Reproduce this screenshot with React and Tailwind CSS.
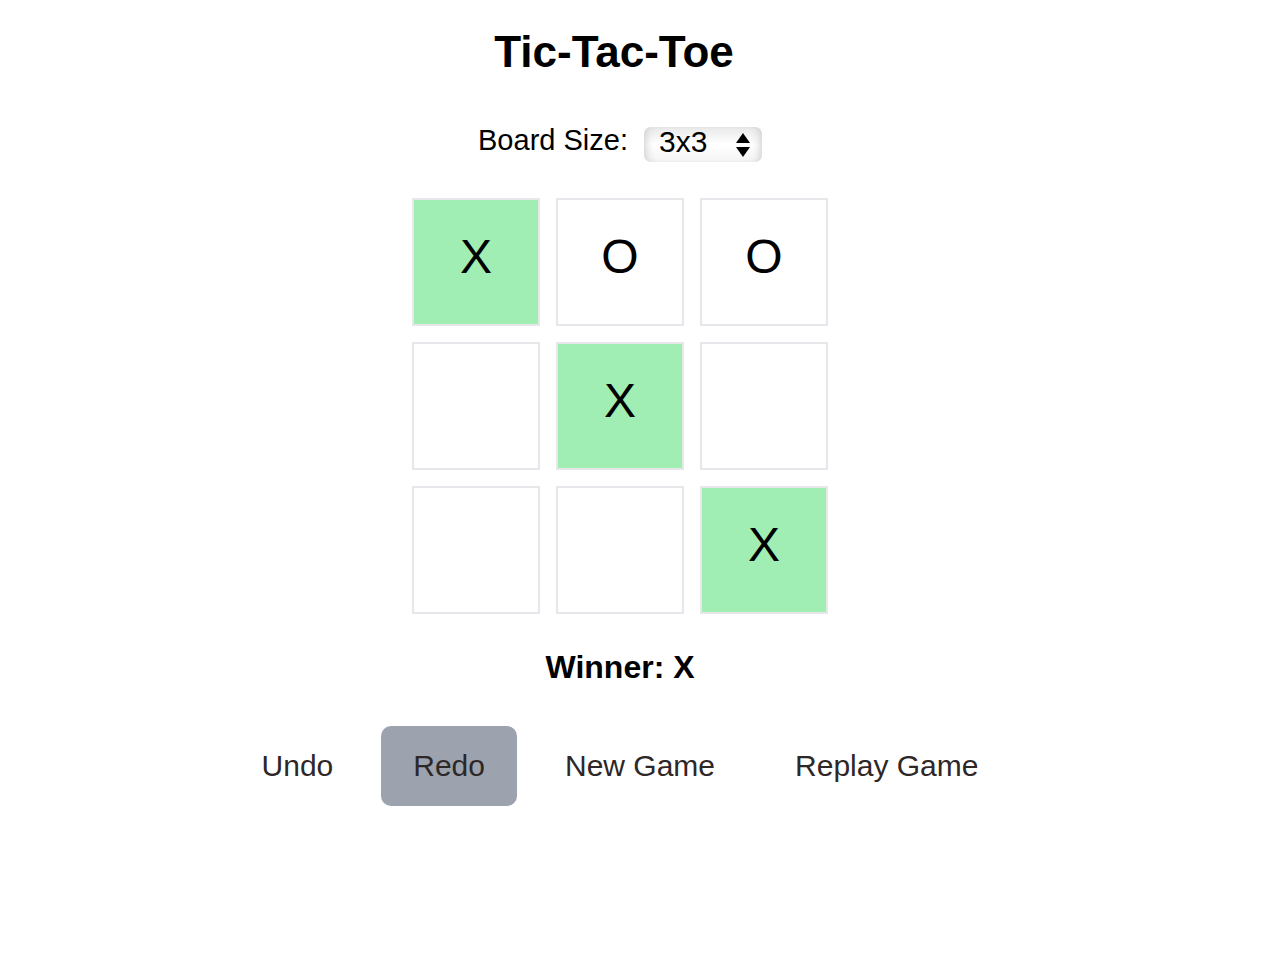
import React, { useState } from 'react';

const font = { fontFamily: '"Liberation Sans", Arial, sans-serif' };

const Cell = ({ value, win }) => (
  <div
    className={`w-[128px] h-[128px] border-2 border-[#e5e7eb] flex items-center justify-center pb-[10px] text-[48px] leading-none text-black ${
      win ? 'bg-[#a0eeb3]' : 'bg-white'
    }`}
  >
    {value}
  </div>
);

const App = () => {
  const [size, setSize] = useState('3x3');
  const board = ['X', 'O', 'O', '', 'X', '', '', '', 'X'];
  const winning = [0, 4, 8];
  const buttons = ['Undo', 'Redo', 'New Game', 'Replay Game'];

  return (
    <div className="w-[1240px] min-h-screen bg-white flex flex-col items-center" style={font}>
      <h1 className="pt-[28px] mr-[12px] text-[44px] leading-[48px] font-bold text-black">Tic-Tac-Toe</h1>

      <div className="mt-[50px] flex items-center gap-4 h-[36px]">
        <label className="text-[29px] leading-[36px] text-black pb-[8px]">Board Size:</label>
        <div className="relative">
          <select
            value={size}
            onChange={(e) => setSize(e.target.value)}
            className="appearance-none w-[118px] h-[35px] pl-[15px] pb-[5px] rounded-[7px] text-[30px] leading-[30px] text-black bg-gradient-to-b from-[#e9e9e9] via-white to-[#f4f4f4] shadow-[inset_8px_0_8px_-6px_#cfcfcf,inset_-8px_0_8px_-6px_#cfcfcf] outline-none"
            style={font}
          >
            <option>3x3</option>
            <option>4x4</option>
            <option>5x5</option>
          </select>
          <svg
            className="absolute right-[11px] top-[5px] pointer-events-none"
            width="16"
            height="26"
            viewBox="0 0 16 26"
          >
            <path d="M8 1 L15 11 L1 11 Z" fill="#000" />
            <path d="M1 15 L15 15 L8 25 Z" fill="#000" />
          </svg>
        </div>
      </div>

      <div className="mt-[36px] grid grid-cols-3 gap-4">
        {board.map((v, i) => (
          <Cell key={i} value={v} win={winning.includes(i)} />
        ))}
      </div>

      <p className="mt-[33px] text-[32px] leading-[40px] font-bold text-black">Winner: X</p>

      <div className="mt-[39px] flex gap-4">
        {buttons.map((b) => (
          <button
            key={b}
            className={`h-[80px] px-8 rounded-[10px] text-[30px] leading-[36px] text-[#2e2727] ${
              b === 'Redo' ? 'bg-[#9ca3af]' : 'bg-transparent'
            }`}
            style={font}
          >
            {b}
          </button>
        ))}
      </div>
    </div>
  );
};

export default App;
